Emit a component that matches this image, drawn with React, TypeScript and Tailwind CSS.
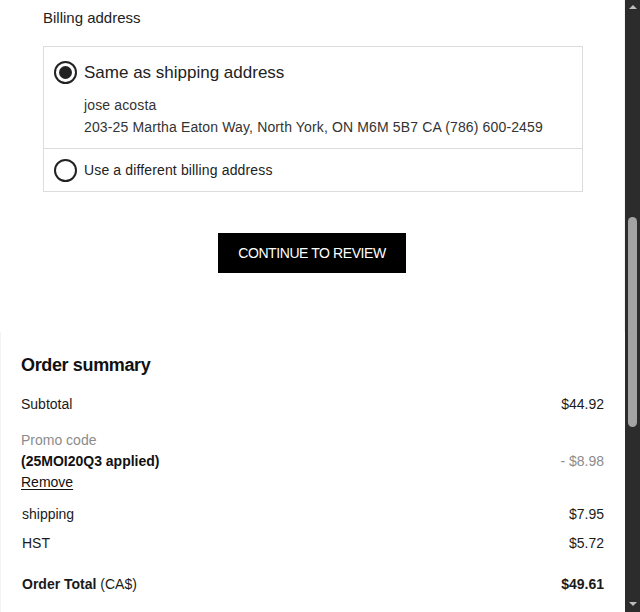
import React from "react";

const font = { fontFamily: '"Liberation Sans", Arial, sans-serif' };

function Radio({ checked }: { checked?: boolean }) {
  return (
    <span className="flex h-[23px] w-[23px] shrink-0 items-center justify-center rounded-full border-2 border-[#222]">
      {checked ? <span className="h-[13px] w-[13px] rounded-full bg-[#222]" /> : null}
    </span>
  );
}

function SummaryRow({ label, value, className = "" }: { label: React.ReactNode; value: React.ReactNode; className?: string }) {
  return (
    <div className={`flex items-center justify-between text-[14px] leading-[20px] text-[#1a1a1a] ${className}`}>
      <div>{label}</div>
      <div>{value}</div>
    </div>
  );
}

function Scrollbar() {
  return (
    <div className="flex h-full w-[15px] shrink-0 flex-col items-center bg-[#2c2c2c]">
      <div className="mt-[5px] h-0 w-0 border-x-[4px] border-b-[4px] border-x-transparent border-b-[#bdbdbd]" />
      <div className="mt-[208px] h-[210px] w-[9px] rounded-full bg-[#a3a3a3]" />
      <div className="mt-auto mb-[6px] h-0 w-0 border-x-[4px] border-t-[4px] border-x-transparent border-t-[#bdbdbd]" />
    </div>
  );
}

export default function App() {
  return (
    <div className="flex h-[612px] w-[640px] overflow-hidden bg-white" style={font}>
      <div className="flex min-w-0 flex-1 flex-col">
        <section className="h-[332px] border-r border-[#f3f3f3] pl-[43px] pr-[41px] pt-[8px]">
          <h2 className="text-[15px] leading-[20px] text-[#222]">Billing address</h2>
          <div className="mt-[18px] border border-[#dcdcdc]">
            <div className="px-[10px] pt-[13px] pb-[10px]">
              <label className="flex items-center gap-[7px]">
                <Radio checked />
                <span className="translate-y-[1px] text-[17px] leading-[24px] text-[#222]">Same as shipping address</span>
              </label>
              <div className="ml-[30px] mt-[10px] text-[14px] leading-[22px] tracking-[0.01em] text-[#333]">
                <div>jose acosta</div>
                <div>203-25 Martha Eaton Way, North York, ON M6M 5B7 CA (786) 600-2459</div>
              </div>
            </div>
            <label className="flex h-[43px] items-center gap-[7px] border-t border-[#dcdcdc] px-[10px]">
              <Radio />
              <span className="text-[14px] tracking-[0.01em] text-[#222]">Use a different billing address</span>
            </label>
          </div>
          <div className="mt-[41px] flex justify-center pr-[2px]">
            <button
              type="button"
              className="h-[40px] w-[188px] bg-black text-[14px] tracking-[-0.03em] text-white"
            >
              CONTINUE TO REVIEW
            </button>
          </div>
        </section>

        <section className="flex-1 border-l border-[#f3f3f3] pl-[20px] pr-[21px] pt-[21px]">
          <h2 className="text-[18px] font-bold leading-[24px] tracking-[-0.02em] text-[#111]">Order summary</h2>
          <SummaryRow className="mt-[17px]" label="Subtotal" value="$44.92" />
          <div className="mt-[16px] flex items-center justify-between text-[14px] leading-[21px]">
            <div>
              <div className="text-[#8c8c8c]">Promo code</div>
              <div className="font-bold text-[#111]">(25MOI20Q3 applied)</div>
              <div className="text-[#111] underline underline-offset-2">Remove</div>
            </div>
            <div className="text-[#8c8c8c]">- $8.98</div>
          </div>
          <SummaryRow className="mt-[11px] pl-[1px]" label="shipping" value="$7.95" />
          <SummaryRow className="mt-[9px] pl-[1px]" label="HST" value="$5.72" />
          <SummaryRow
            className="mt-[21px] pl-[1px]"
            label={
              <>
                <span className="font-bold">Order Total</span> (CA$)
              </>
            }
            value={<span className="font-bold">$49.61</span>}
          />
        </section>
      </div>
      <Scrollbar />
    </div>
  );
}
